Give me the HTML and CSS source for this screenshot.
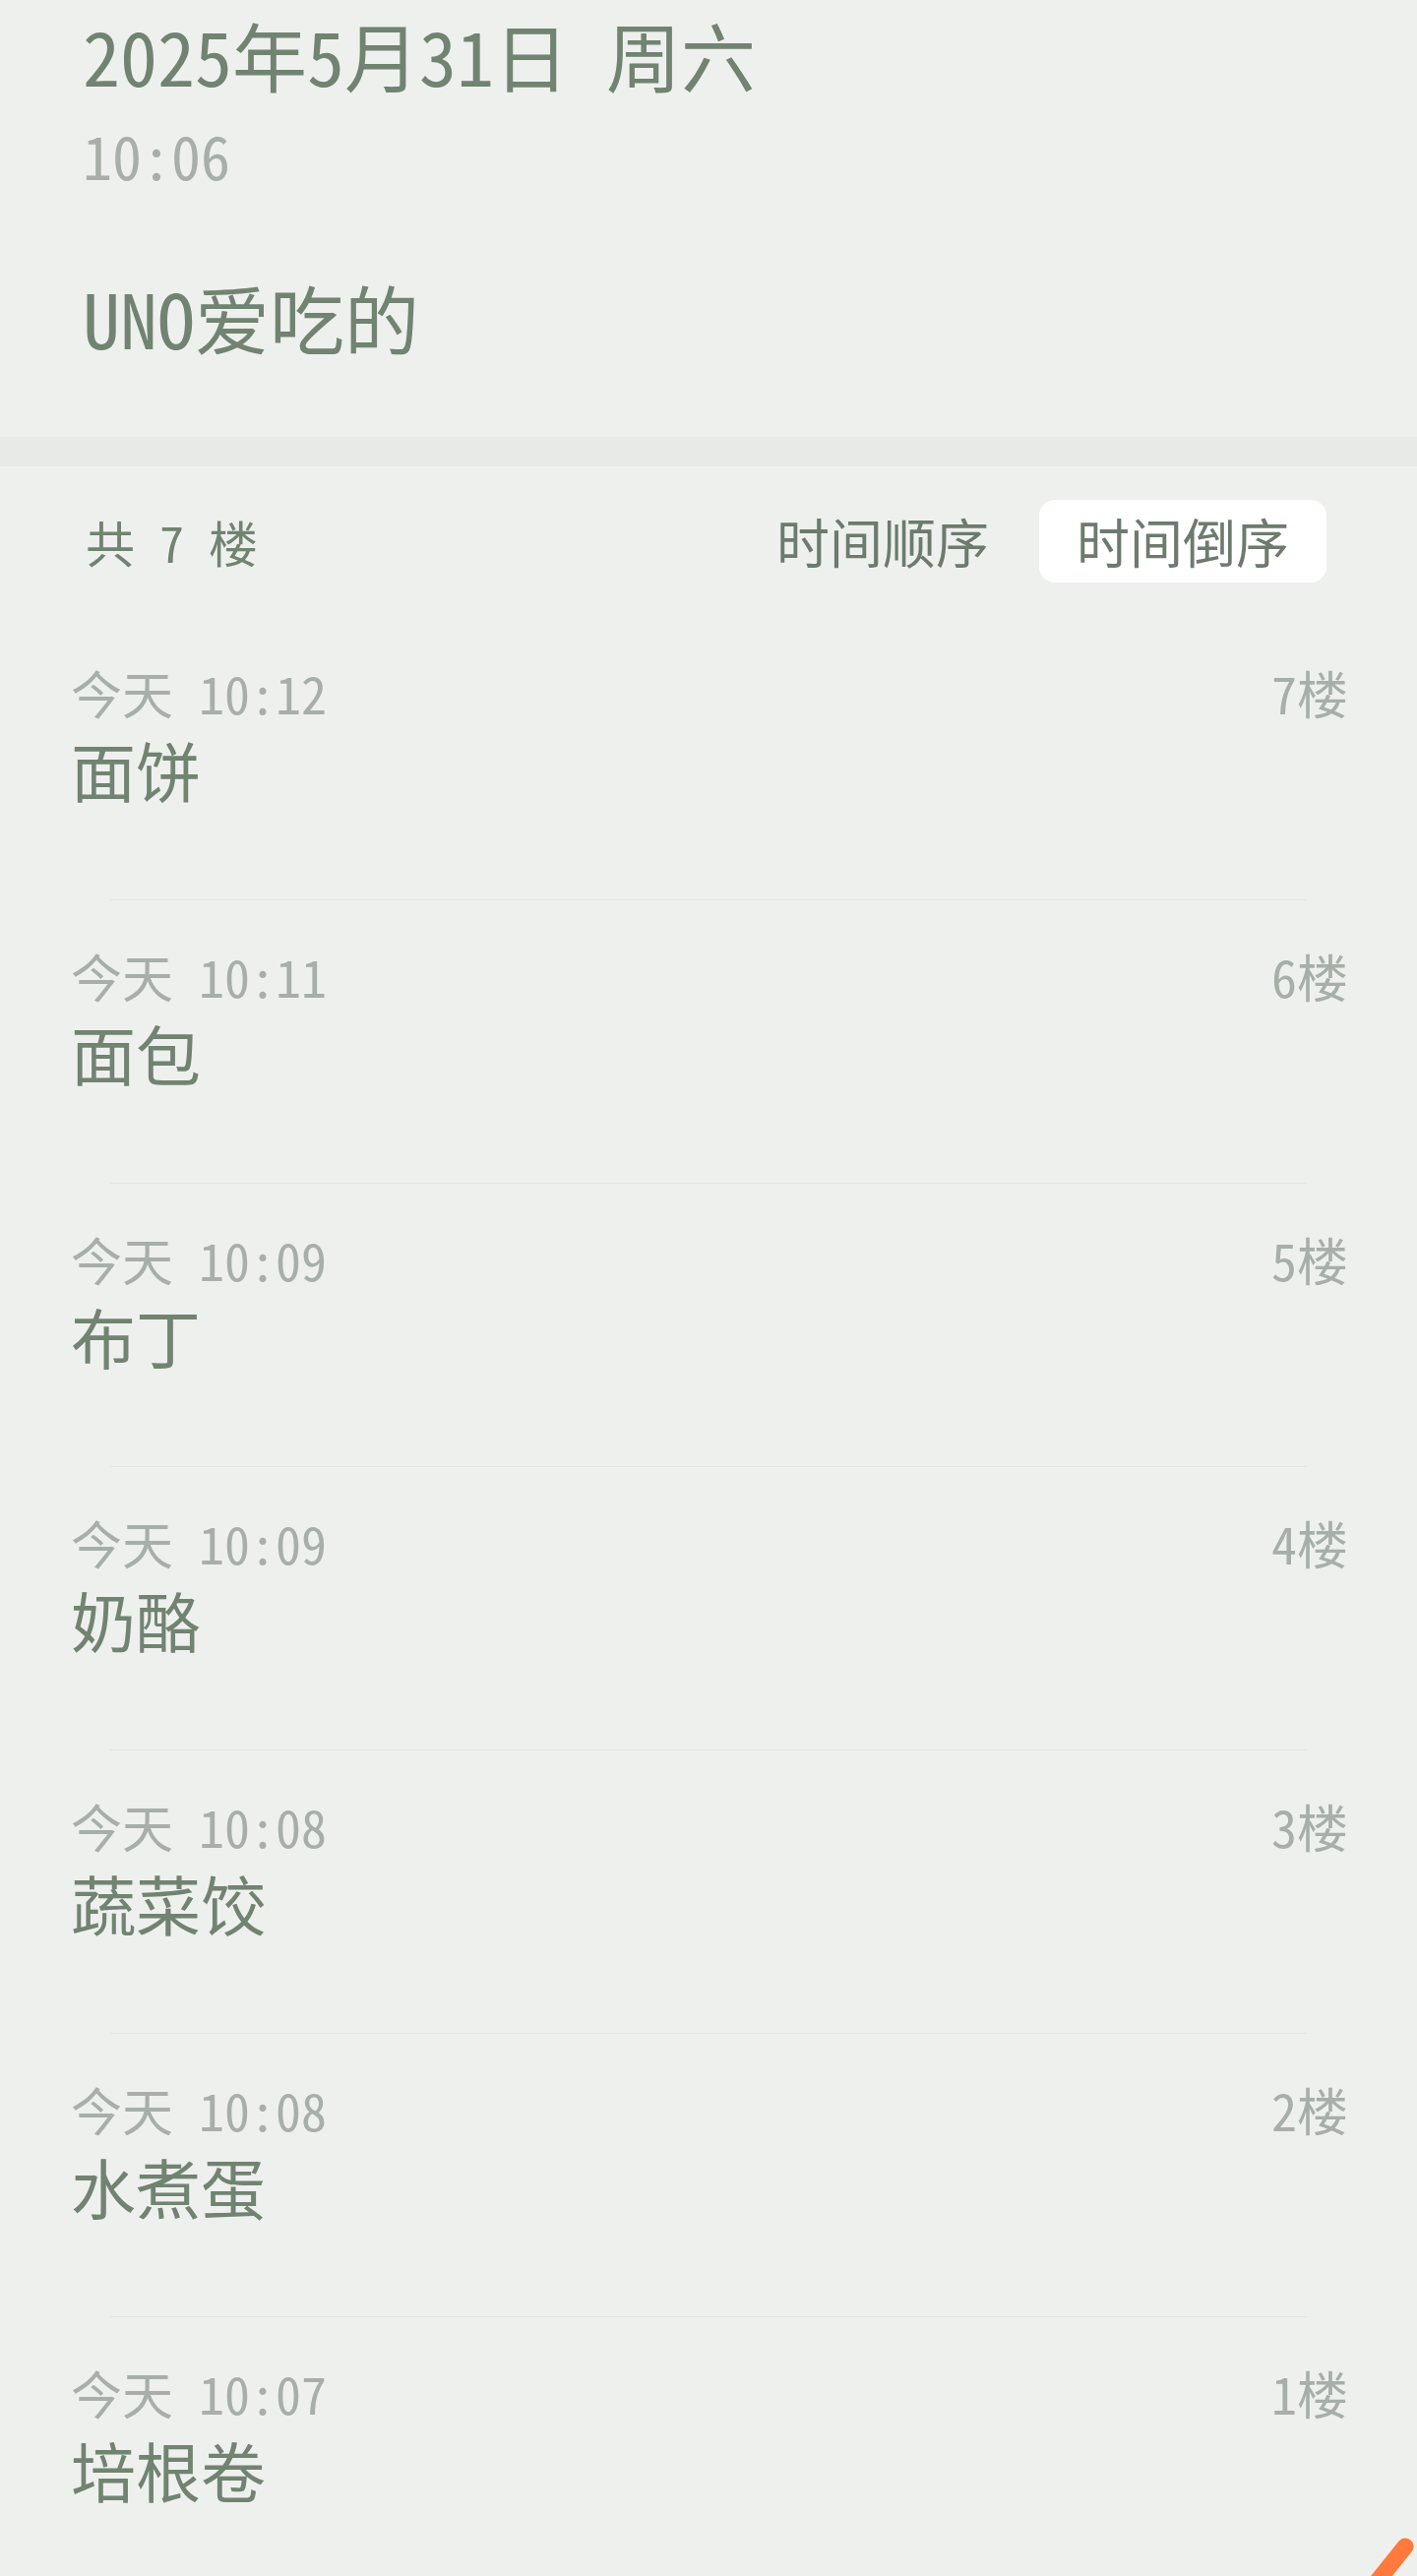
FILE: index.html
```html
<!DOCTYPE html>
<html lang="zh-CN">
<head>
    <meta charset="UTF-8">
    <meta name="viewport" content="width=device-width, initial-scale=1.0">
    <title>UNO爱吃的</title>
    <link rel="stylesheet" href="styles.css">
</head>
<body>
    <header class="note-head">
        <div class="note-date">2025年5月31日 周六</div>
        <div class="note-time">10:06</div>
        <h1 class="note-title">UNO爱吃的</h1>
    </header>

    <div class="band"></div>

    <div class="list-head">
        <span class="floor-count">共 7 楼</span>
        <div class="sort-tabs">
            <span class="sort-tab">时间顺序</span>
            <span class="sort-tab active">时间倒序</span>
        </div>
    </div>

    <div class="floors">
        <div class="floor">
            <div class="floor-meta"><span>今天 10:12</span><span>7楼</span></div>
            <div class="floor-text">面饼</div>
        </div>
        <div class="floor">
            <div class="floor-meta"><span>今天 10:11</span><span>6楼</span></div>
            <div class="floor-text">面包</div>
        </div>
        <div class="floor">
            <div class="floor-meta"><span>今天 10:09</span><span>5楼</span></div>
            <div class="floor-text">布丁</div>
        </div>
        <div class="floor">
            <div class="floor-meta"><span>今天 10:09</span><span>4楼</span></div>
            <div class="floor-text">奶酪</div>
        </div>
        <div class="floor">
            <div class="floor-meta"><span>今天 10:08</span><span>3楼</span></div>
            <div class="floor-text">蔬菜饺</div>
        </div>
        <div class="floor">
            <div class="floor-meta"><span>今天 10:08</span><span>2楼</span></div>
            <div class="floor-text">水煮蛋</div>
        </div>
        <div class="floor">
            <div class="floor-meta"><span>今天 10:07</span><span>1楼</span></div>
            <div class="floor-text">培根卷</div>
        </div>
    </div>

    <svg class="fab-edge" width="50" height="50" viewBox="0 0 50 50">
        <line x1="38" y1="20" x2="6" y2="60" stroke="#ff7a3c" stroke-width="17" stroke-linecap="round"/>
    </svg>
</body>
</html>
```

FILE: styles.css
```css
body {
    font-family: "Noto Sans Mono CJK SC", "Noto Sans CJK SC", "DejaVu Sans Mono", monospace;
    margin: 0;
    padding: 0;
    background-color: #eef0ee;
    color: #718371;
}
.note-head {
    padding: 3px 84px 72px;
}
.note-date {
    font-size: 76px;
    line-height: 104px;
}
.note-time {
    font-size: 60px;
    line-height: 80px;
    margin-top: 10px;
    color: #a7afa8;
}
.note-title {
    font-size: 76px;
    font-weight: normal;
    line-height: 100px;
    margin: 75px 0 0;
}
.band {
    height: 30px;
    background-color: #e7eae7;
}
.list-head {
    display: flex;
    justify-content: space-between;
    align-items: center;
    height: 84px;
    margin: 34px 0 35px;
    padding: 0 92px 0 87px;
}
.floor-count {
    font-size: 50px;
}
.sort-tabs {
    display: flex;
    gap: 13px;
}
.sort-tab {
    font-size: 54px;
    line-height: 84px;
    padding: 0 38px;
    border-radius: 16px;
    color: #6c7b6d;
}
.sort-tab.active {
    background-color: white;
}
.floor {
    padding: 44px 70px 90px 72px;
}
.floor:not(:last-child) {
    background: linear-gradient(#e3e6e3, #e3e6e3) no-repeat center bottom / 1216px 1px;
}
.floor-meta {
    display: flex;
    justify-content: space-between;
    font-size: 52px;
    line-height: 66px;
    color: #a7afa8;
}
.floor-text {
    font-size: 66px;
    line-height: 88px;
}
.fab-edge {
    position: fixed;
    right: 0;
    bottom: 0;
}
```
